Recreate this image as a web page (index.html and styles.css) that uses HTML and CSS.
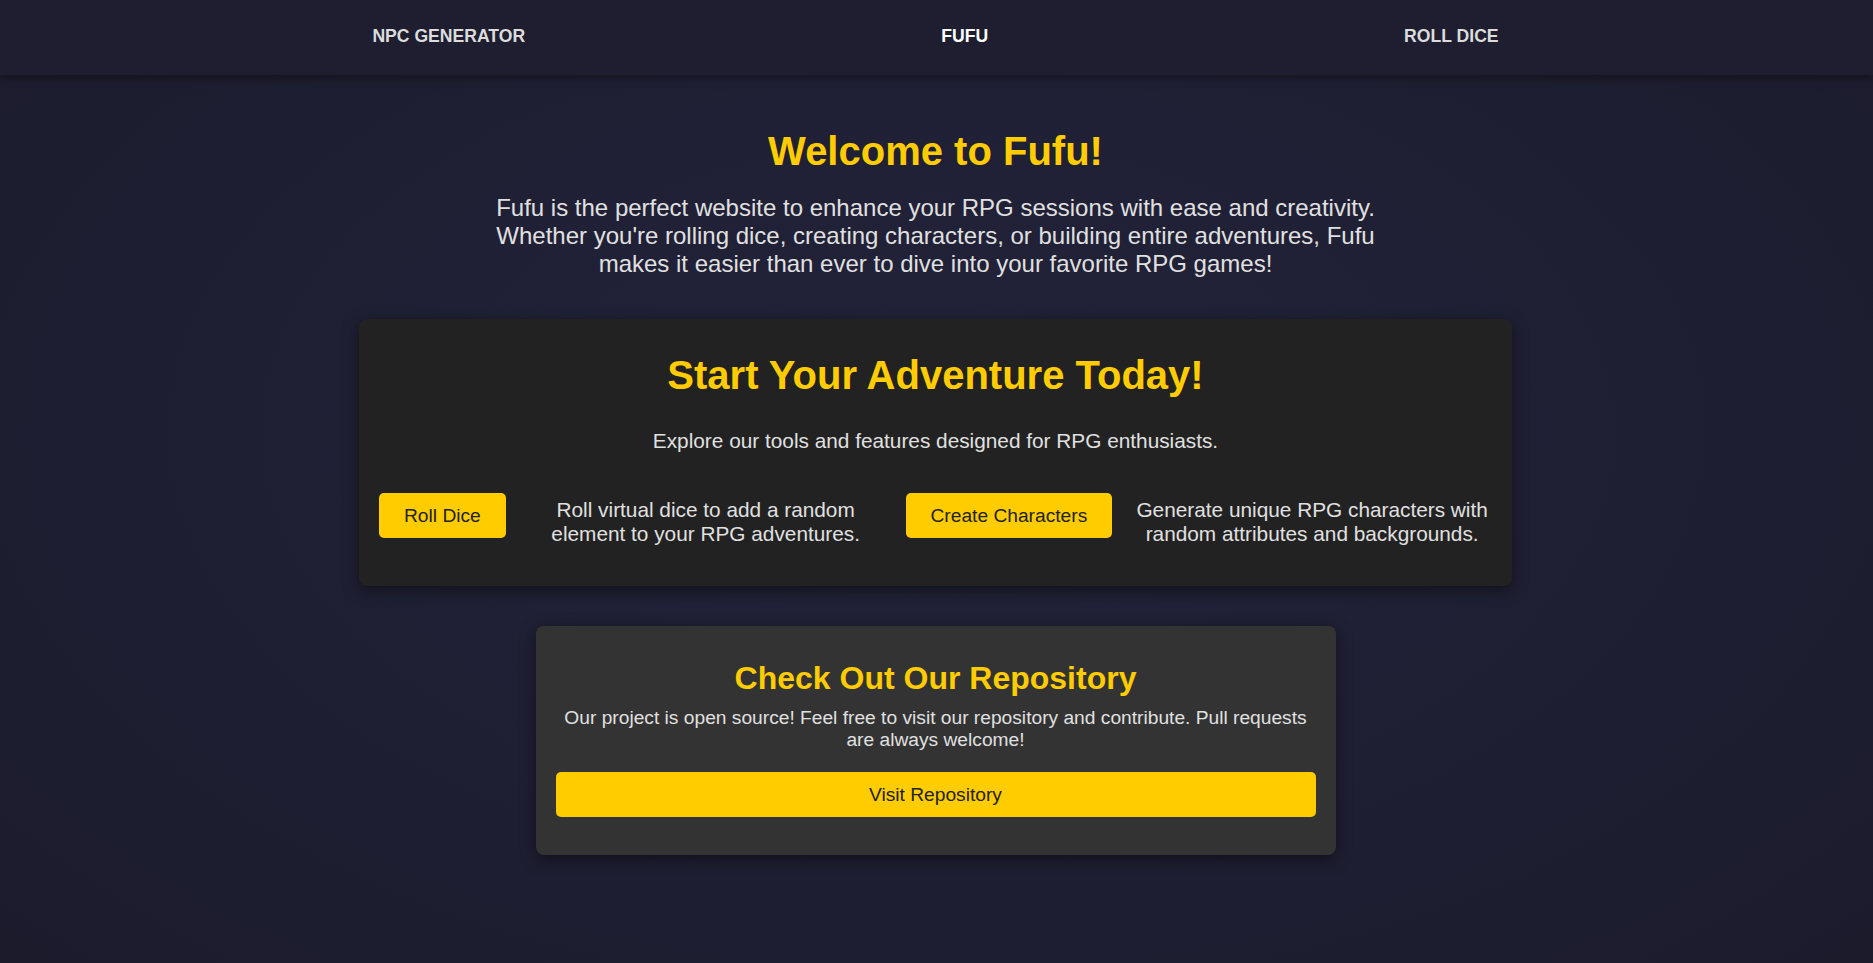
FILE: index.html
```html
<!DOCTYPE html>
<html lang="en">
<head>
<meta charset="utf-8">
<title>Fufu</title>
<link rel="stylesheet" href="styles.css">
</head>
<body>
<header class="site-header">
  <nav class="nav">
    <a class="nav-link" href="#">NPC GENERATOR</a>
    <a class="nav-link nav-link--brand" href="#">FUFU</a>
    <a class="nav-link" href="#">ROLL DICE</a>
  </nav>
</header>
<main class="main">
  <section class="intro">
    <h1 class="intro-title">Welcome to Fufu!</h1>
    <p class="intro-text">Fufu is the perfect website to enhance your RPG sessions with ease and creativity. Whether you're rolling dice, creating characters, or building entire adventures, Fufu makes it easier than ever to dive into your favorite RPG games!</p>
  </section>
  <section class="card card--adventure">
    <h2 class="card-title card-title--big">Start Your Adventure Today!</h2>
    <p class="card-lead">Explore our tools and features designed for RPG enthusiasts.</p>
    <div class="features">
      <a class="btn" href="#">Roll Dice</a>
      <p class="feature-text">Roll virtual dice to add a random element to your RPG adventures.</p>
      <a class="btn" href="#">Create Characters</a>
      <p class="feature-text">Generate unique RPG characters with random attributes and backgrounds.</p>
    </div>
  </section>
  <section class="card card--repo">
    <h2 class="card-title card-title--mid">Check Out Our Repository</h2>
    <p class="repo-text">Our project is open source! Feel free to visit our repository and contribute. Pull requests are always welcome!</p>
    <a class="btn btn--block" href="#">Visit Repository</a>
  </section>
</main>
</body>
</html>
```

FILE: styles.css
```css
* { box-sizing: border-box; }

html, body { height: 100%; }

body {
  margin: 0;
  font-family: "Liberation Sans", Arial, sans-serif;
  color: #e0e0e0;
  background: radial-gradient(ellipse 70% 80% at 50% 45%, #222339 0%, #1f1f34 55%, #1b1b2c 100%);
  background-color: #1c1c2e;
  min-height: 100vh;
}

.site-header {
  position: relative;
  z-index: 1;
  height: 75px;
  padding-top: 26px;
  background: #1e1e30;
  box-shadow: 0 2px 10px rgba(0, 0, 0, 0.45);
  display: flex;
  justify-content: center;
  align-items: flex-start;
}

.nav {
  display: flex;
  gap: 416px;
  padding-right: 2px;
}

.nav-link {
  font-size: 17.6px;
  font-weight: bold;
  color: #dcdcdc;
  text-decoration: none;
}

.nav-link--brand { color: #ffffff; }

.main {
  display: flex;
  flex-direction: column;
  align-items: center;
  padding-top: 54px;
  padding-right: 2px;
}

.intro {
  display: flex;
  flex-direction: column;
  align-items: center;
  text-align: center;
}

.intro-title {
  margin: 0;
  font-size: 40px;
  color: #ffcc00;
}

.intro-text {
  margin: 20px 0 0;
  max-width: 900px;
  font-size: 24px;
  color: #e0e0e0;
}

.card {
  border-radius: 8px;
  box-shadow: 0 4px 15px rgba(0, 0, 0, 0.5);
  text-align: center;
}

.card--adventure {
  width: 1153px;
  margin-top: 41px;
  padding: 34px 20px 40px;
  background: #222222;
}

.card--repo {
  width: 800px;
  margin-top: 40px;
  padding: 34px 20px 38px;
  background: #333333;
}

.card-title {
  margin: 0;
  color: #ffcc00;
}

.card-title--big { font-size: 40px; }
.card-title--mid { font-size: 32px; }

.card-lead {
  margin: 31px 0 0;
  font-size: 20.8px;
}

.features {
  margin-top: 40px;
  display: grid;
  grid-template-columns: auto 1fr auto 1fr;
  column-gap: 20px;
  align-items: start;
}

.feature-text {
  margin: 5px 0 0;
  font-size: 20.8px;
  text-align: center;
}

.btn {
  display: inline-block;
  padding: 11.6px 25px;
  font-size: 19.2px;
  color: #222222;
  background: #ffcc00;
  border-radius: 5px;
  text-decoration: none;
  white-space: nowrap;
}

.repo-text {
  margin: 10px 0 0;
  font-size: 19.2px;
}

.btn--block {
  display: block;
  margin-top: 21px;
  text-align: center;
}
```
